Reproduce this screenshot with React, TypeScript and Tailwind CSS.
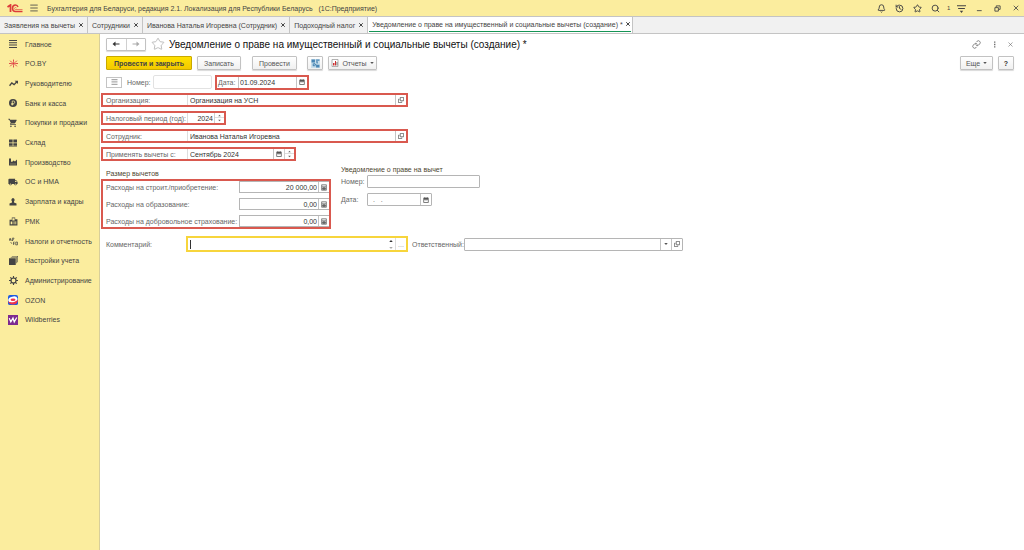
import type { ReactNode } from "react";
import { Bell, History, Link, Menu, Search, Star, X } from "lucide-react";
import { MdLocalShipping, MdShoppingCart } from "react-icons/md";

const tabs = [
  "Заявления на вычеты",
  "Сотрудники",
  "Иванова Наталья Игоревна (Сотрудник)",
  "Подоходный налог",
];

function Svg({ children, className = "size-2" }: { children: ReactNode; className?: string }) {
  return (
    <svg viewBox="0 0 16 16" className={`${className} shrink-0`} fill="currentColor" aria-hidden="true">
      {children}
    </svg>
  );
}

function CalendarIcon() {
  return (
    <Svg className="size-[6px]">
      <path d="M1 2h14v13H1zM3 7v6h10V7z" fillRule="evenodd" />
      <path d="M4 0h2v3H4zM10 0h2v3h-2zM4 9h8v1H4z" />
    </Svg>
  );
}

function OpenIcon() {
  return (
    <Svg className="size-[6px]">
      <path d="M6 1h9v9H6zM4 6H1v9h9v-3" fill="none" stroke="currentColor" strokeWidth="2" />
    </Svg>
  );
}

function CalculatorIcon() {
  return (
    <Svg className="h-[7px] w-[6px]">
      <path d="M1 0h14v16H1zM3 2v3h10V2zM3 7v2h2V7zm4 0v2h2V7zm4 0v2h2V7zM3 11v2h2v-2zm4 0v2h2v-2zm4 0v2h2v-2z" fillRule="evenodd" />
    </Svg>
  );
}

function Caret() {
  return (
    <Svg className="size-[4px]">
      <path d="M1 4h14l-7 8z" />
    </Svg>
  );
}

const sections: { label: string; icon: ReactNode }[] = [
  {
    label: "Главное",
    icon: <Svg><path d="M0 0h16v2H0zM0 4.6h16v2H0zM0 9.2h16v2H0zM0 13.8h16v2H0z" /></Svg>,
  },
  {
    label: "PO.BY",
    icon: (
      <Svg className="size-[9px] text-[#dd3a42]">
        <path d="M8 5V1M8 11v4M5.5 6.5L2 3M10.5 6.5L14 3M5.5 9.5L2 13M10.5 9.5L14 13M5 8H0M11 8h5" stroke="currentColor" strokeWidth="1.6" />
        <circle cx="8" cy="8" r="2.2" />
      </Svg>
    ),
  },
  {
    label: "Руководителю",
    icon: (
      <Svg className="size-[9px]">
        <path d="M1 12l4-5 4 3 5-5" fill="none" stroke="currentColor" strokeWidth="2.4" />
        <path d="M10 3h6v6z" />
      </Svg>
    ),
  },
  {
    label: "Банк и касса",
    icon: (
      <Svg>
        <circle cx="8" cy="8" r="8" />
        <path d="M6.5 13V4H9a2.5 2.5 0 010 5H4.5M4.5 11H9" fill="none" stroke="#fbed9e" strokeWidth="1.5" />
      </Svg>
    ),
  },
  { label: "Покупки и продажи", icon: <MdShoppingCart className="size-[10px]" /> },
  {
    label: "Склад",
    icon: <Svg><path d="M0 1h7.3v6H0zM8.7 1H16v6H8.7zM0 8.5h7.3v5H0zM8.7 8.5H16v5H8.7zM0 14h16v1H0z" /></Svg>,
  },
  {
    label: "Производство",
    icon: <Svg><path d="M0 15V1h4v6l2 1 3-3 3 2 4-4v12z" /><path d="M2 12h12" stroke="#fbed9e" strokeWidth="0.7" /></Svg>,
  },
  { label: "ОС и НМА", icon: <MdLocalShipping className="size-[10px]" /> },
  {
    label: "Зарплата и кадры",
    icon: <Svg><path d="M8 0a3.5 4 0 012 7v2l5 2v4H1v-4l5-2V7a3.5 4 0 012-7z" /></Svg>,
  },
  {
    label: "РМК",
    icon: (
      <Svg className="size-[9px]">
        <path d="M1 5h4V1h6v3h4v11H1zM6 2v4h4V2zM3 8v5h3V8zm5 0v2h2V8zm3 0v2h2V8zm-3 3v2h2v-2zm3 0v2h2v-2z" fillRule="evenodd" />
      </Svg>
    ),
  },
  {
    label: "Налоги и отчетность",
    icon: (
      <Svg className="size-[9px]">
        <path d="M0 7l2-5 2 5M1 5h3M6 7V2h3L6 7M8 14V9h2M8 12h2M12 9h3v5h-3zM3 9l2 3" fill="none" stroke="currentColor" strokeWidth="1.3" />
      </Svg>
    ),
  },
  {
    label: "Настройки учета",
    icon: (
      <Svg className="size-[9px]">
        <path d="M5 0h11v11h-1V1H5zM3 2h11v11h-1V3H3zM0 4h12v12H0z" />
      </Svg>
    ),
  },
  {
    label: "Администрирование",
    icon: (
      <Svg className="size-[9px]">
        <circle cx="8" cy="8" r="4.5" fill="none" stroke="currentColor" strokeWidth="2" />
        <path d="M8 0v4M8 12v4M0 8h4M12 8h4M2.3 2.3l3 3M10.7 10.7l3 3M2.3 13.7l3-3M10.7 5.3l3-3" stroke="currentColor" strokeWidth="2" />
      </Svg>
    ),
  },
  {
    label: "OZON",
    icon: (
      <Svg className="size-[10px]">
        <rect width="16" height="16" rx="3" fill="#1f5be0" />
        <ellipse cx="8" cy="7.5" rx="7.5" ry="5" fill="#fff" transform="rotate(-15 8 8)" />
        <path d="M0 10c4 3 11 2 16-3 0 5-3 8-8 8s-7-2-8-5z" fill="#f0324b" />
        <ellipse cx="8" cy="7.5" rx="4" ry="2" fill="#f0324b" />
      </Svg>
    ),
  },
  {
    label: "Wildberries",
    icon: (
      <Svg className="size-[10px]">
        <rect width="16" height="16" fill="#7d2a90" />
        <path d="M2 5l2.5 6L8 5l2 6 4-7" fill="none" stroke="#fff" strokeWidth="2" />
      </Svg>
    ),
  },
];

function Spinner() {
  return (
    <span className="flex w-[10px] flex-col items-center justify-around self-stretch border-l border-[#d0d0d0] text-[#666]">
      <button type="button" aria-label="Увеличить" className="flex h-[5px] w-full items-center justify-center border-b border-[#ddd]">
        <Svg className="size-[3px]"><path d="M1 12h14L8 4z" /></Svg>
      </button>
      <button type="button" aria-label="Уменьшить" className="flex h-[5px] w-full items-center justify-center">
        <Svg className="size-[3px]"><path d="M1 4h14l-7 8z" /></Svg>
      </button>
    </span>
  );
}

function FieldButton({ label, children }: { label: string; children: ReactNode }) {
  return (
    <button
      type="button"
      aria-label={label}
      className="flex w-[11px] shrink-0 items-center justify-center self-stretch border-l border-[#c4c4c4] text-[#555]"
    >
      {children}
    </button>
  );
}

// Row outlined in red: fixed label column, then the value and its buttons
function MarkedRow({
  id,
  label,
  value,
  width,
  align = "",
  children,
}: {
  id: string;
  label: string;
  value: string;
  width: string;
  align?: string;
  children: ReactNode;
}) {
  return (
    <div className={`flex h-[14px] items-center border-2 border-[#d9594f] pl-[3px] ${width}`}>
      <label htmlFor={id} className="w-[81px] shrink-0 whitespace-nowrap">{label}</label>
      <input
        id={id}
        defaultValue={value}
        className={`h-full min-w-0 flex-1 border-l border-[#ddd] pr-px pl-[2px] text-[#333] outline-none ${align}`}
      />
      {children}
    </div>
  );
}

function AmountRow({ id, label, value }: { id: string; label: string; value: string }) {
  return (
    <div className="flex h-3 items-center">
      <label htmlFor={id} className="w-[133px] shrink-0 whitespace-nowrap">{label}</label>
      <div className="flex h-3 min-w-0 flex-1 items-center border border-r-0 border-[#b5b5b5]">
        <input id={id} defaultValue={value} className="h-full min-w-0 flex-1 pr-px text-right text-[#333] outline-none" />
        <FieldButton label="Калькулятор"><CalculatorIcon /></FieldButton>
      </div>
    </div>
  );
}

const buttonStyle =
  "flex h-[14px] items-center justify-center rounded-[1px] border border-[#c2c2c2] bg-linear-to-b from-white to-[#f0f0f0] shadow-[0_1px_1px_rgba(0,0,0,0.15)]";

function TitleBar() {
  return (
    <header className="flex h-4 items-center bg-[#fbed9e] pr-1 pl-[7px] text-[#444]">
      <svg viewBox="0 0 32 18" className="h-[9px] w-4" fill="none" stroke="#dc3a3a" aria-label="1С">
        <path d="M1 6l6-4v14" strokeWidth="3.5" />
        <path d="M22 6c-1-3-3-4-5-4-8 0-8 13 0 13h14" strokeWidth="3" />
        <path d="M19 8c-4-3-6 3-2 3h14" strokeWidth="1.2" />
      </svg>
      <button type="button" aria-label="Меню" className="ml-[6px]"><Menu className="size-[10px]" strokeWidth={2} /></button>
      <h1 className="ml-2 whitespace-pre">
        Бухгалтерия для Беларуси, редакция 2.1. Локализация для Республики Беларусь{"   "}(1С:Предприятие)
      </h1>
      <div className="ml-auto flex items-center">
        <button type="button" aria-label="Уведомления" className="w-[18px]"><Bell className="size-[9px]" strokeWidth={2.5} /></button>
        <button type="button" aria-label="История" className="w-[18px]"><History className="size-[9px]" strokeWidth={2.5} /></button>
        <button type="button" aria-label="Избранное" className="w-[18px]"><Star className="size-[9px]" strokeWidth={2.5} /></button>
        <button type="button" aria-label="Поиск" className="w-4"><Search className="size-[9px]" strokeWidth={2.5} /></button>
        <span className="w-[10px] text-[6px]">1</span>
        <button type="button" aria-label="Настройка панели" className="w-[19px]">
          <Svg className="size-[9px]"><path d="M0 2h16v2H0zM2 7h12v2H2zM5 12h6l-3 4z" /></Svg>
        </button>
        <button type="button" aria-label="Свернуть" className="w-[18px]">
          <Svg className="size-[7px]"><path d="M2 12h11v2H2z" /></Svg>
        </button>
        <button type="button" aria-label="Развернуть" className="w-[18px]">
          <Svg className="size-[7px]"><path d="M2 6h8v8H2zM5 5V2h9v8h-3" fill="none" stroke="currentColor" strokeWidth="2" /></Svg>
        </button>
        <button type="button" aria-label="Закрыть"><X className="size-2" strokeWidth={2.5} /></button>
      </div>
    </header>
  );
}

function TabBar() {
  return (
    <nav className="flex h-[18px] border-y border-[#c4c4c4] bg-[#f1f1f1] text-[#444]">
      {tabs.map((tab) => (
        <div key={tab} className="flex items-center gap-[3px] border-r border-[#c4c4c4] pr-[3px] pl-1 whitespace-nowrap">
          <button type="button">{tab}</button>
          <button type="button" aria-label={`Закрыть: ${tab}`}><X className="size-[6px]" strokeWidth={4} /></button>
        </div>
      ))}
      <div className="flex border-r border-[#c4c4c4] bg-white px-px whitespace-nowrap">
        <div className="mb-px flex items-center gap-[2px] border-b border-[#159455] pl-[3px]">
          <button type="button">Уведомление о праве на имущественный и социальные вычеты (создание) *</button>
          <button type="button" aria-label="Закрыть вкладку"><X className="size-[6px]" strokeWidth={4} /></button>
        </div>
      </div>
    </nav>
  );
}

function Toolbar() {
  return (
    <>
      <div className="flex h-5 items-center pr-[10px] pl-[5px]">
        <div className="flex h-[13px] w-10 rounded-[1px] border border-[#c2c2c2] shadow-[0_1px_1px_rgba(0,0,0,0.15)]">
          <button type="button" aria-label="Назад" className="flex flex-1 items-center justify-center border-r border-[#d0d0d0] text-[#333]">
            <Svg><path d="M1 8l6-5v4h8v2H7v4z" /></Svg>
          </button>
          <button type="button" aria-label="Вперед" className="flex flex-1 items-center justify-center text-[#aaa]">
            <Svg><path d="M15 8L9 3v4H1v2h8v4z" /></Svg>
          </button>
        </div>
        <button type="button" aria-label="В избранное" className="ml-[5px] text-[#b5b5b5]"><Star className="size-[14px]" strokeWidth={1.5} /></button>
        <h2 className="ml-1 text-[10px] whitespace-nowrap text-[#111]">
          Уведомление о праве на имущественный и социальные вычеты (создание) *
        </h2>
        <div className="ml-auto flex items-center gap-[6px] text-[#666]">
          <button type="button" aria-label="Ссылка"><Link className="size-[9px]" /></button>
          <button type="button" aria-label="Еще действия" className="w-[14px]">
            <Svg className="mx-auto size-[7px]"><path d="M7 1h3v3H7zM7 6.5h3v3H7zM7 12h3v3H7z" /></Svg>
          </button>
          <button type="button" aria-label="Закрыть форму"><X className="size-[7px]" /></button>
        </div>
      </div>
      <div className="flex h-[18px] items-center pr-[10px] pl-[5px] text-[#555]">
        <button
          type="button"
          className="flex h-[14px] w-[86px] items-center justify-center rounded-[1px] border border-[#c9a900] bg-linear-to-b from-[#ffe100] to-[#f3c900] font-bold text-[#444]"
        >
          Провести и закрыть
        </button>
        <button type="button" className={`ml-[5px] w-11 ${buttonStyle}`}>Записать</button>
        <button type="button" className={`ml-[11px] w-[45px] ${buttonStyle}`}>Провести</button>
        <button type="button" aria-label="Структура подчиненности" className={`ml-[10px] w-4 ${buttonStyle}`}>
          <Svg className="size-[9px] text-[#4a86b4]">
            <path d="M0 0h16v16H0z" fill="#c9deeb" />
            <path d="M1 1h6v5H1zM9 10h6v5H9zM9 4h3v4h-2V6H9zM3 8h2v3h3v2H3z" />
            <path d="M9 1h6v2H9zM6 7l4 3-2 1-4-3z" />
          </Svg>
        </button>
        <button type="button" className={`ml-[5px] w-[49px] gap-[3px] ${buttonStyle}`}>
          <Svg>
            <path d="M2 1h12v14H2z" fill="#fff" stroke="#999" strokeWidth="1.5" />
            <path d="M4 8h3v5H4zM8 4h2v9H8z" fill="#c33" />
            <path d="M11 6h2v7h-2z" fill="#777" />
          </Svg>
          Отчеты
          <Caret />
        </button>
        <button type="button" className={`ml-auto w-[33px] gap-[3px] ${buttonStyle}`}>Еще <Caret /></button>
        <button type="button" className={`ml-[5px] w-4 font-bold text-[#333] ${buttonStyle}`}>?</button>
      </div>
    </>
  );
}

function DeductionForm() {
  return (
    <form className="text-[#666]">
      <div className="mt-[3px] flex h-[14px] items-center">
        <button type="button" aria-label="Статус документа" className="ml-[5px] flex h-[11px] w-4 items-center justify-center border border-[#c4c4c4] text-[#aaa]">
          <Svg className="h-[6px] w-[9px]"><path d="M0 0h16v3H0zM0 5h16v2H0zM0 9h16v2H0zM0 13h16v3H0z" /></Svg>
        </button>
        <label htmlFor="number" className="ml-[5px] w-[26px]">Номер:</label>
        <input id="number" className="h-[14px] w-[59px] rounded-[2px] border border-[#e2e2e2] outline-none" />
        <div className="ml-[3px] flex h-[15px] w-[94px] items-center border-2 border-[#d9594f] pl-px">
          <label htmlFor="date" className="w-5">Дата:</label>
          <input id="date" defaultValue="01.09.2024" className="h-full min-w-0 flex-1 border-l border-[#c4c4c4] pl-px text-[#333] outline-none" />
          <FieldButton label="Календарь"><CalendarIcon /></FieldButton>
        </div>
      </div>

      <div className="mt-1 flex flex-col gap-1">
        <MarkedRow id="org" label="Организация:" value="Организация на УСН" width="w-[307px]">
          <FieldButton label="Открыть организацию"><OpenIcon /></FieldButton>
        </MarkedRow>
        <MarkedRow id="year" label="Налоговый период (год):" value="2024" width="w-[125px]" align="text-right">
          <Spinner />
        </MarkedRow>
        <MarkedRow id="employee" label="Сотрудник:" value="Иванова Наталья Игоревна" width="w-[307px]">
          <FieldButton label="Открыть сотрудника"><OpenIcon /></FieldButton>
        </MarkedRow>
        <MarkedRow id="since" label="Применять вычеты с:" value="Сентябрь 2024" width="w-[195px]">
          <FieldButton label="Календарь"><CalendarIcon /></FieldButton>
          <Spinner />
        </MarkedRow>
      </div>

      <div className="mt-1 flex gap-[10px]">
        <section className="w-[230px] pt-[4px]">
          <h3 className="h-[10px] pl-[5px] text-[#4d4630]">Размер вычетов</h3>
          <div className="flex h-[50px] flex-col justify-between border-2 border-[#d9594f] pl-[3px]">
            <AmountRow id="building" label="Расходы на строит./приобретение:" value="20 000,00" />
            <AmountRow id="education" label="Расходы на образование:" value="0,00" />
            <AmountRow id="insurance" label="Расходы на добровольное страхование:" value="0,00" />
          </div>
        </section>
        <section>
          <h3 className="h-[10px] text-[#4d4630]">Уведомление о праве на вычет</h3>
          <div className="flex items-center">
            <label htmlFor="notice-number" className="w-[26px]">Номер:</label>
            <input id="notice-number" className="h-[13px] w-[113px] rounded-[1px] border border-[#b5b5b5] outline-none" />
          </div>
          <div className="mt-[5px] flex items-center">
            <label htmlFor="notice-date" className="w-[26px]">Дата:</label>
            <div className="flex h-[13px] w-[65px] rounded-[1px] border border-[#b5b5b5]">
              <input id="notice-date" defaultValue="  .   ." className="min-w-0 flex-1 pl-px outline-none" />
              <FieldButton label="Календарь"><CalendarIcon /></FieldButton>
            </div>
          </div>
        </section>
      </div>

      <div className="mt-[7px] flex h-4 items-center pl-[5px]">
        <label htmlFor="comment" className="w-20">Комментарий:</label>
        <div className="flex h-4 w-[222px] items-center border-2 border-[#f7d53c]">
          <span className="ml-[2px] h-[9px] w-px bg-[#333]" />
          <input id="comment" className="h-full min-w-0 flex-1 outline-none" />
          <span className="flex w-2 flex-col items-center gap-[3px]">
            <Svg className="size-[4px] text-[#333]"><path d="M1 12h14L8 4z" /></Svg>
            <Svg className="size-[4px] text-[#aaa]"><path d="M1 4h14l-7 8z" /></Svg>
          </span>
          <button type="button" className="w-[11px] self-stretch border-l border-[#ddd] text-[#999]">...</button>
        </div>
        <label htmlFor="responsible" className="ml-1 w-[52px]">Ответственный:</label>
        <div className="flex h-[13px] w-[219px] rounded-[1px] border border-[#b5b5b5]">
          <input id="responsible" className="min-w-0 flex-1 outline-none" />
          <FieldButton label="Выбрать"><Caret /></FieldButton>
          <FieldButton label="Открыть"><OpenIcon /></FieldButton>
        </div>
      </div>
    </form>
  );
}

export default function App() {
  return (
    <div className="flex min-h-screen flex-col bg-white font-['Liberation_Sans',Arial,sans-serif] text-[7px] leading-[9px]">
      <TitleBar />
      <TabBar />
      <div className="flex flex-1">
        <aside className="w-[100px] shrink-0 border-r border-[#d8cf9a] bg-[#fbed9e] pt-px">
          <ul className="flex h-[294px] flex-col justify-between text-[#444]">
            {sections.map(({ label, icon }) => (
              <li key={label}>
                <a href="#" className="flex h-[18px] items-center gap-[7px] pl-2 whitespace-nowrap">
                  <span className="flex w-[10px] justify-center">{icon}</span>
                  {label}
                </a>
              </li>
            ))}
          </ul>
        </aside>
        <main className="min-w-0 flex-1 pl-px">
          <Toolbar />
          <DeductionForm />
        </main>
      </div>
    </div>
  );
}
